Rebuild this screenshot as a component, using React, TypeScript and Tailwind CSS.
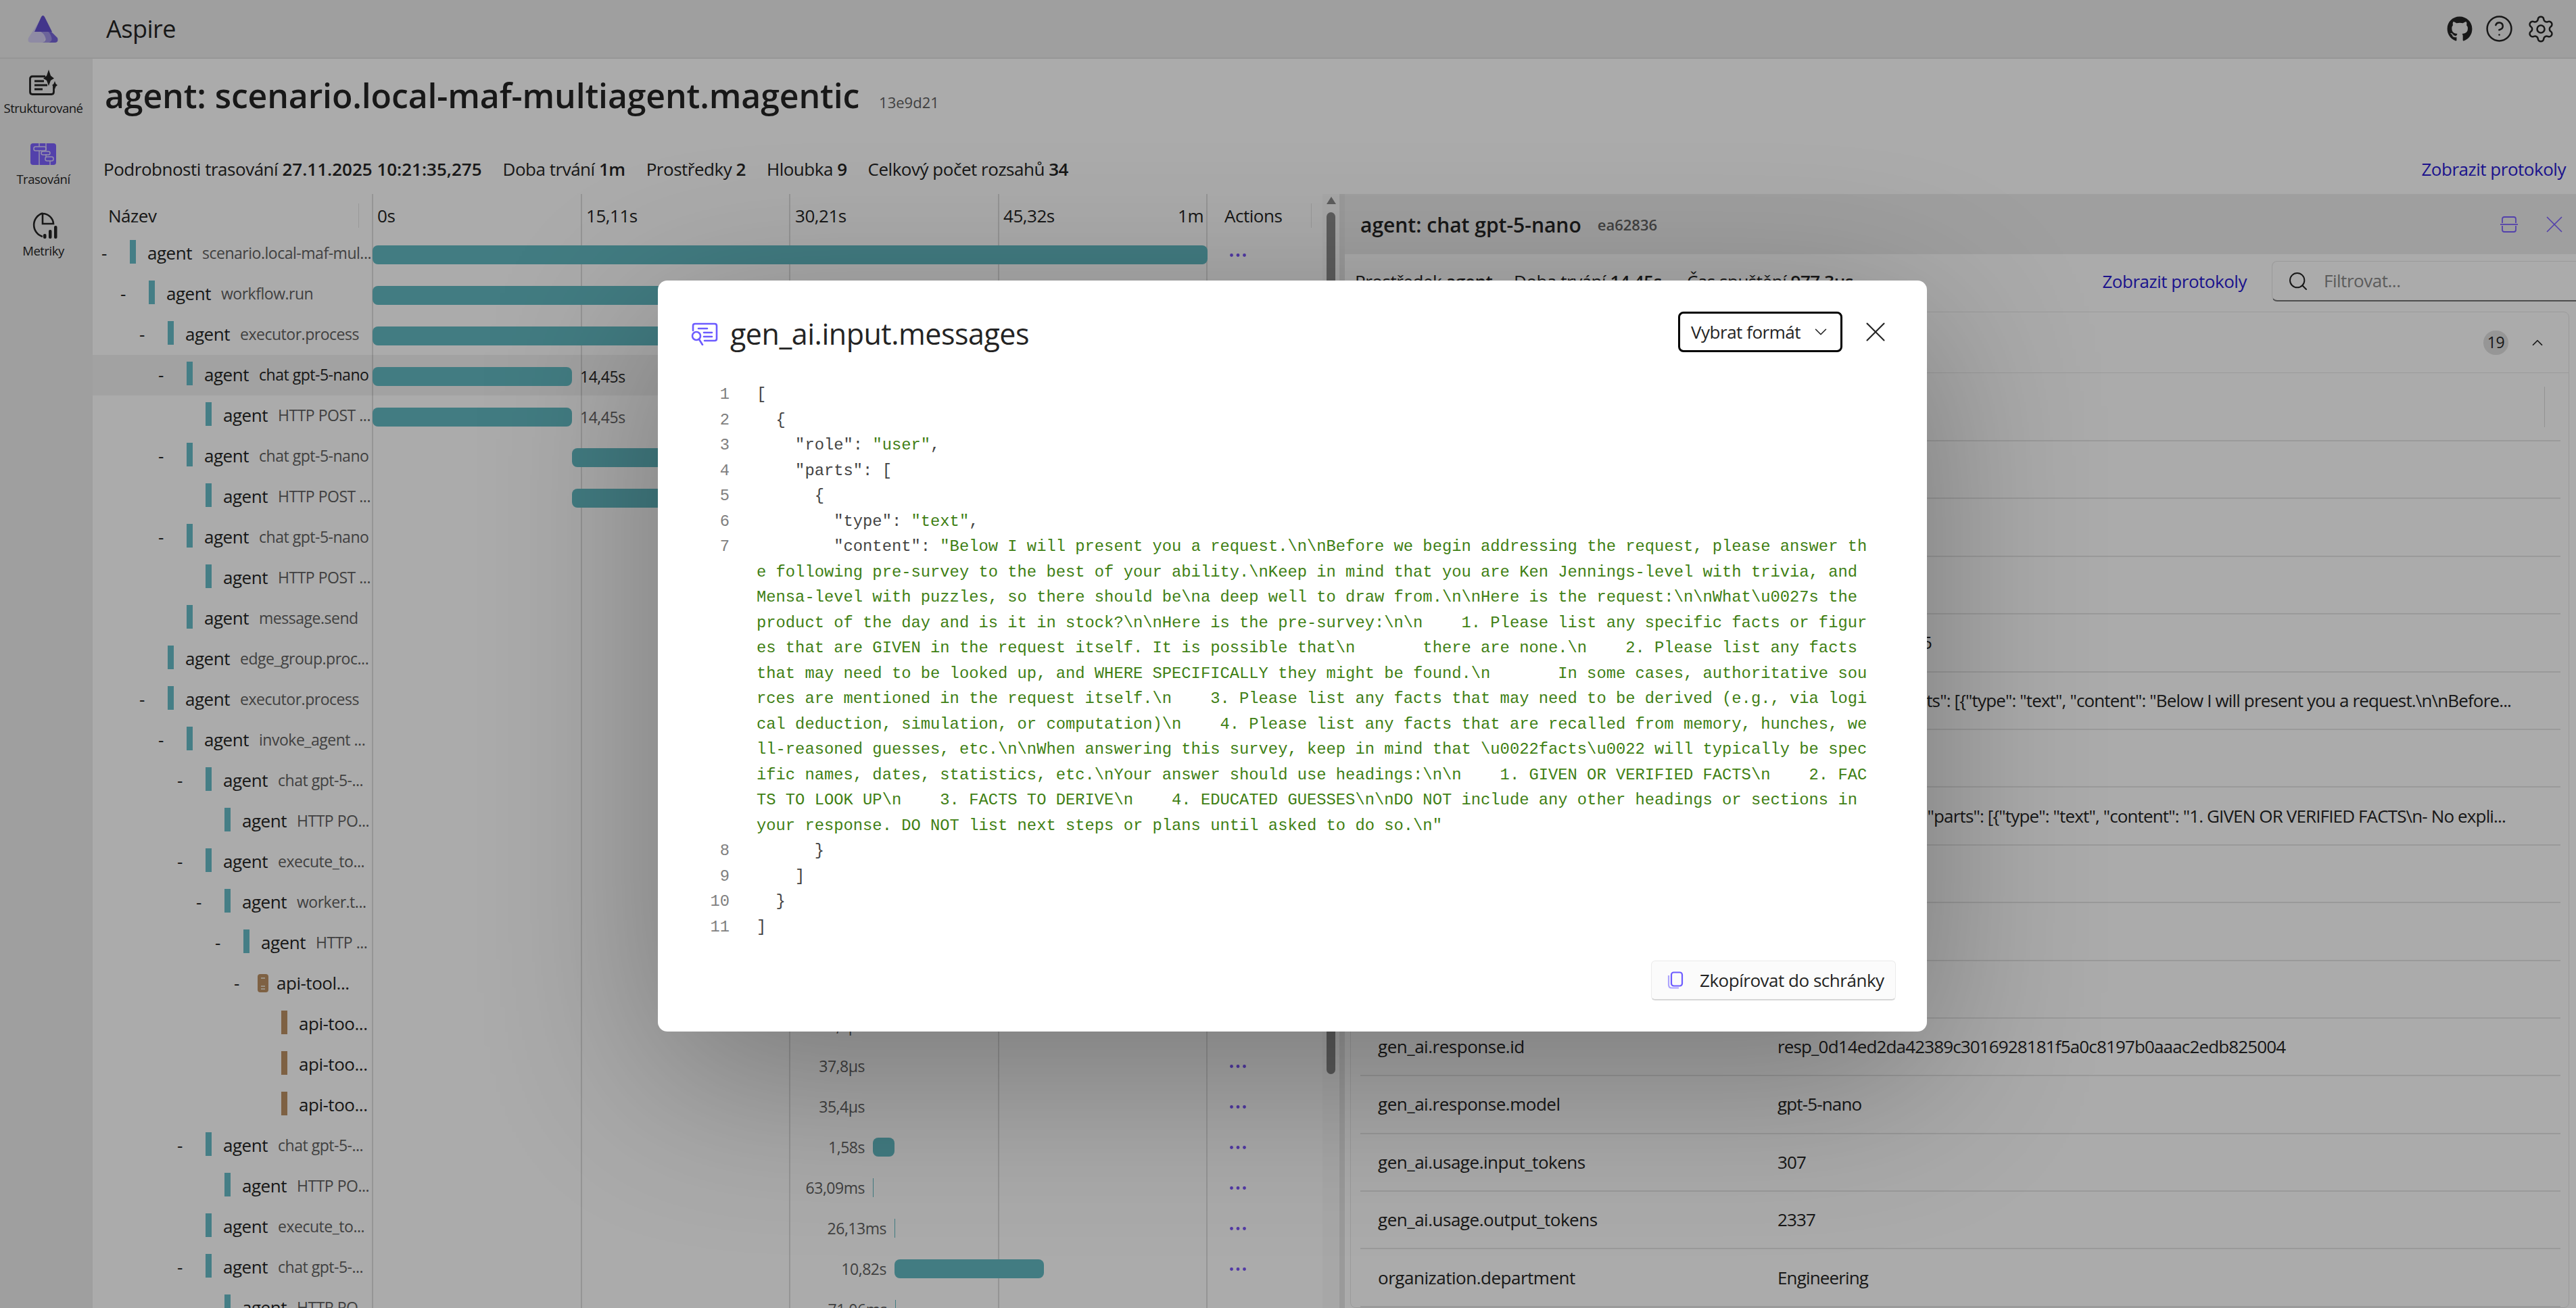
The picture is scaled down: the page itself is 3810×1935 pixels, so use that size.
import { ChevronDown, ChevronUp, CircleHelp, Search, Settings, X } from 'lucide-react';
import { FaGithub } from 'react-icons/fa';

interface SpanRow {
  level: number;
  sub?: string;
  name?: string;
  expand?: boolean;
  service?: boolean;
  selected?: boolean;
  color?: 'teal' | 'brown';
  start: number;
  width: number;
  label?: string;
  labelLeft?: boolean;
}

const rows: SpanRow[] = [
  { level: 0, sub: 'scenario.local-maf-mul...', expand: true, start: 1, width: 1235 },
  { level: 1, sub: 'workflow.run', expand: true, start: 1, width: 1235 },
  { level: 2, sub: 'executor.process', expand: true, start: 1, width: 1235 },
  { level: 3, sub: 'chat gpt-5-nano', expand: true, selected: true, start: 1, width: 295, label: '14,45s' },
  { level: 4, sub: 'HTTP POST ...', start: 1, width: 295, label: '14,45s' },
  { level: 3, sub: 'chat gpt-5-nano', expand: true, start: 296, width: 300 },
  { level: 4, sub: 'HTTP POST ...', start: 296, width: 300 },
  { level: 3, sub: 'chat gpt-5-nano', expand: true, start: 600, width: 100 },
  { level: 4, sub: 'HTTP POST ...', start: 600, width: 100 },
  { level: 3, sub: 'message.send', start: 700, width: 2 },
  { level: 2, sub: 'edge_group.proc...', start: 700, width: 2 },
  { level: 2, sub: 'executor.process', expand: true, start: 700, width: 500 },
  { level: 3, sub: 'invoke_agent ...', expand: true, start: 700, width: 500 },
  { level: 4, sub: 'chat gpt-5-...', expand: true, start: 700, width: 40 },
  { level: 5, sub: 'HTTP PO...', start: 700, width: 40 },
  { level: 4, sub: 'execute_to...', expand: true, start: 741, width: 1 },
  { level: 5, sub: 'worker.t...', expand: true, start: 741, width: 1 },
  { level: 6, sub: 'HTTP ...', expand: true, start: 741, width: 1 },
  { level: 7, name: 'api-tool...', service: true, expand: true, color: 'brown', start: 741, width: 0 },
  { level: 8, name: 'api-too...', color: 'brown', start: 741, width: 0, label: '34,6µs', labelLeft: true },
  { level: 8, name: 'api-too...', color: 'brown', start: 741, width: 0, label: '37,8µs', labelLeft: true },
  { level: 8, name: 'api-too...', color: 'brown', start: 741, width: 0, label: '35,4µs', labelLeft: true },
  { level: 4, sub: 'chat gpt-5-...', expand: true, start: 741, width: 32, label: '1,58s', labelLeft: true },
  { level: 5, sub: 'HTTP PO...', start: 741, width: 1, label: '63,09ms', labelLeft: true },
  { level: 4, sub: 'execute_to...', start: 773, width: 1, label: '26,13ms', labelLeft: true },
  { level: 4, sub: 'chat gpt-5-...', expand: true, start: 773, width: 221, label: '10,82s', labelLeft: true },
  { level: 5, sub: 'HTTP PO...', start: 774, width: 1, label: '71,06ms', labelLeft: true },
];

const attributes = [
  ['gen_ai.operation.name', 'chat'],
  ['gen_ai.provider.name', 'openai'],
  ['gen_ai.request.model', 'gpt-5-nano'],
  ['gen_ai.system.version', 'maf-multiagent-v1.5'],
  [
    'gen_ai.input.messages',
    '[{"role": "user", "parts": [{"type": "text", "content": "Below I will present you a request.\\n\\nBefore...',
  ],
  ['gen_ai.output.type', 'text'],
  [
    'gen_ai.output.messages',
    '[{"role": "assistant", "parts": [{"type": "text", "content": "1. GIVEN OR VERIFIED FACTS\\n- No expli...',
  ],
  ['gen_ai.request.temperature', '1'],
  ['gen_ai.request.top_p', '1'],
  ['gen_ai.response.finish_reasons', 'stop'],
  ['gen_ai.response.id', 'resp_0d14ed2da42389c3016928181f5a0c8197b0aaac2edb825004'],
  ['gen_ai.response.model', 'gpt-5-nano'],
  ['gen_ai.usage.input_tokens', '307'],
  ['gen_ai.usage.output_tokens', '2337'],
  ['organization.department', 'Engineering'],
];

const contentLines = [
  'e following pre-survey to the best of your ability.\\nKeep in mind that you are Ken Jennings-level with trivia, and ',
  'Mensa-level with puzzles, so there should be\\na deep well to draw from.\\n\\nHere is the request:\\n\\nWhat\\u0027s the ',
  'product of the day and is it in stock?\\n\\nHere is the pre-survey:\\n\\n    1. Please list any specific facts or figur',
  'es that are GIVEN in the request itself. It is possible that\\n       there are none.\\n    2. Please list any facts ',
  'that may need to be looked up, and WHERE SPECIFICALLY they might be found.\\n       In some cases, authoritative sou',
  'rces are mentioned in the request itself.\\n    3. Please list any facts that may need to be derived (e.g., via logi',
  'cal deduction, simulation, or computation)\\n    4. Please list any facts that are recalled from memory, hunches, we',
  'll-reasoned guesses, etc.\\n\\nWhen answering this survey, keep in mind that \\u0022facts\\u0022 will typically be spec',
  'ific names, dates, statistics, etc.\\nYour answer should use headings:\\n\\n    1. GIVEN OR VERIFIED FACTS\\n    2. FAC',
  'TS TO LOOK UP\\n    3. FACTS TO DERIVE\\n    4. EDUCATED GUESSES\\n\\nDO NOT include any other headings or sections in ',
  'your response. DO NOT list next steps or plans until asked to do so.\\n"',
];

const Str = ({ children }: { children: string }) => <span className="text-[#3f7f14]">{children}</span>;

function AspireLogo() {
  return (
    <svg width="45" height="40" viewBox="0 0 45 40">
      <path d="M22 1 L1 33 Q-1 40 5 40 H24 L30 20 Z" fill="#d6d0f5" />
      <path d="M16 22 H28 Q34 24 36 33 Q37 40 31 40 H22 Q28 38 26 32 Q24 26 16 22 Z" fill="#a195e6" />
      <path d="M28 22 H33 L44 33 Q46 40 40 40 H31 Q37 38 35 32 Q33 25 28 22 Z" fill="#7664d8" />
      <path d="M22.5 0 Q24 0 25 2 L36 24 H10 L20 2 Q21 0 22.5 0 Z" fill="#6350d0" />
    </svg>
  );
}

function StructuredIcon() {
  return (
    <svg width="42" height="38" viewBox="0 0 42 38" fill="none">
      <path d="M24 10 H5 Q1.500 10 1.500 13.500 V33 Q1.500 36.500 5 36.500 H33 Q36.500 36.500 36.500 33 V24" stroke="#242424" strokeWidth="2.800" />
      <path d="M8 17 H22 M8 23 H27 M8 29 H20" stroke="#242424" strokeWidth="2.800" />
      <path d="M29 0 L32 9 L37 13 L32 16 L29 24 L26 16 L21 13 L26 9 Z" fill="#242424" />
      <path d="M38 17 L39.500 21 L42 23 L39.500 25 L38 29 L36.500 25 L34 23 L36.500 21 Z" fill="#242424" />
    </svg>
  );
}

function TraceIcon() {
  return (
    <svg width="38" height="32" viewBox="0 0 38 32" fill="none">
      <rect width="38" height="32" rx="4" fill="#7d62ff" />
      <path d="M13 0 V5 M13 11 V32 M23 0 V11 M23 16 V21 M29 26 V32" stroke="#ddd6ff" strokeWidth="1.500" />
      <rect x="5" y="5" width="18" height="6" rx="2.500" stroke="#ddd6ff" strokeWidth="1.500" />
      <rect x="16" y="12" width="13" height="5" rx="2.500" stroke="#ddd6ff" strokeWidth="1.500" />
      <rect x="22" y="20" width="12" height="6" rx="2.500" stroke="#ddd6ff" strokeWidth="1.500" />
    </svg>
  );
}

function MetricsIcon() {
  return (
    <svg width="42" height="40" viewBox="0 0 42 40" fill="none">
      <path d="M20 1.500 A18 18 0 0 0 20 36" stroke="#242424" strokeWidth="2.600" />
      <path d="M20 2 V17 H36 A16 16 0 0 0 20 2 Z" stroke="#242424" strokeWidth="2.600" />
      <rect x="21" y="32" width="4.500" height="7" rx="2" fill="#242424" />
      <rect x="29" y="26" width="4.500" height="13" rx="2" fill="#242424" />
      <rect x="37" y="20" width="4.500" height="19" rx="2" fill="#242424" />
    </svg>
  );
}

function SplitIcon() {
  return (
    <svg width="26" height="24" viewBox="0 0 26 24" fill="none" stroke="#7d62ff" strokeWidth="1.800">
      <path d="M3 10 V4 Q3 1 6 1 H20 Q23 1 23 4 V10" />
      <path d="M0 12 H26" />
      <path d="M3 14 V20 Q3 23 6 23 H20 Q23 23 23 20 V14" />
    </svg>
  );
}

function DialogIcon() {
  return (
    <svg width="40" height="34" viewBox="0 0 40 34" fill="none" stroke="#6d5cff" strokeWidth="2.600" strokeLinecap="round">
      <path d="M3 12 V5 Q3 2 6 2 H35 Q38 2 38 5 V24 Q38 27 35 27 H20" />
      <path d="M11 9 H24 M19 15 H31 M19 21 H31" />
      <circle cx="8" cy="20" r="6" />
      <path d="M12 25 L17 33" />
    </svg>
  );
}

function CopyIcon() {
  return (
    <svg width="24" height="26" viewBox="0 0 24 26" fill="none" stroke="#6d5cff" strokeWidth="2.200">
      <rect x="6" y="1.500" width="16" height="20" rx="3.500" />
      <path d="M2 6 V20 Q2 24.500 6.500 24.500 H17" strokeOpacity="0.550" />
    </svg>
  );
}

function Dots() {
  return (
    <svg width="24" height="5" viewBox="0 0 24 5" fill="#7a55f5" className="mt-[4px]">
      <circle cx="2.500" cy="2.500" r="2.400" />
      <circle cx="12" cy="2.500" r="2.400" />
      <circle cx="21.500" cy="2.500" r="2.400" />
    </svg>
  );
}

function Stat({ label, value, valueClass }: { label: string; value: string; valueClass?: string }) {
  return (
    <span className="whitespace-nowrap">
      {label} <b className={`font-semibold ${valueClass ?? ''}`}>{value}</b>
    </span>
  );
}

function SpanRowView({ row }: { row: SpanRow }) {
  const markerColor = row.color === 'brown' ? 'bg-[#bc9165]' : 'bg-[#68bdc8]';
  return (
    <div className={`flex h-[60px] items-center ${row.selected ? 'bg-black/5' : ''}`}>
      <div
        className="flex h-full w-[413px] shrink-0 items-center overflow-hidden whitespace-nowrap text-[26px] text-[#242424]"
        style={{ paddingLeft: 13 + row.level * 28 }}
      >
        <span className="-mt-[2px] w-[42px] shrink-0">{row.expand ? '-' : ''}</span>
        {row.service ? (
          <svg width="16" height="27" viewBox="0 0 16 27" className="-ml-[7px] mr-[12px] -mt-[2px] shrink-0">
            <rect width="16" height="27" rx="4" fill="#bc9165" />
            <path d="M5 6 H11 M5 18 H11 M5 22 H11" stroke="#e8dcc8" strokeWidth="2" />
          </svg>
        ) : (
          <span className={`-mt-[5px] mr-[17px] h-[35px] w-[9px] shrink-0 ${markerColor}`} />
        )}
        {row.name ? (
          <span className="-mt-[2px]">{row.name}</span>
        ) : (
          <>
            <span className="-mt-[2px] mr-[15px]">agent</span>
            <span className={`-mt-[2px] text-[23px] ${row.selected ? 'text-[#242424]' : 'text-[#616161]'}`}>{row.sub}</span>
          </>
        )}
      </div>
      <div className="relative flex h-full w-[1236px] shrink-0 items-center">
        <div className="mt-[4px] flex items-center" style={{ marginLeft: row.start }}>
          {row.label && row.labelLeft && (
            <span className="absolute whitespace-nowrap text-[23px] text-[#616161]" style={{ right: 1236 - row.start + 12 }}>
              {row.label}
            </span>
          )}
          <div
            className={row.width > 2 ? 'h-[28px] rounded-lg bg-[#63b9c2]' : 'h-[28px] bg-[#63b9c2]'}
            style={{ width: row.width }}
          />
          {row.label && !row.labelLeft && (
            <span className={`ml-[12px] whitespace-nowrap text-[23px] ${row.selected ? 'text-[#242424]' : 'text-[#616161]'}`}>
              {row.label}
            </span>
          )}
        </div>
      </div>
      <div className="flex flex-1 items-center pl-[33px]">
        <Dots />
      </div>
    </div>
  );
}

function TracePane() {
  return (
    <div className="relative h-full w-[1819px] shrink-0 overflow-hidden">
      {/* timeline grid lines sit behind the rows */}
      <div className="absolute bottom-0 left-[413px] top-0 flex w-[1236px] border-r-2 border-[#dfdfdf]">
        <div className="flex-1 border-l-2 border-[#dfdfdf]" />
        <div className="flex-1 border-l-2 border-[#dfdfdf]" />
        <div className="flex-1 border-l-2 border-[#dfdfdf]" />
        <div className="flex-1 border-l-2 border-[#dfdfdf]" />
      </div>
      <div className="relative">
        <div className="flex h-[58px] items-center pt-[6px] text-[26px] text-[#242424]">
          <div className="flex w-[413px] shrink-0 items-center justify-between pl-[23px]">
            <span>Název</span>
            <span className="mr-[19px] h-[36px] w-px bg-[#e4e4e4]" />
          </div>
          <div className="flex w-[1236px] shrink-0 pl-[8px] pr-[6px]">
            <span className="w-[309px]">0s</span>
            <span className="w-[309px]">15,11s</span>
            <span className="w-[308px]">30,21s</span>
            <span>45,32s</span>
            <span className="ml-auto">1m</span>
          </div>
          <div className="flex flex-1 items-center justify-between pl-[25px] pr-[16px]">
            <span>Actions</span>
            <span className="h-[36px] w-px bg-[#e4e4e4]" />
          </div>
        </div>
        {rows.map((row, i) => (
          <SpanRowView key={i} row={row} />
        ))}
      </div>
    </div>
  );
}

function DetailsPane() {
  return (
    <div className="h-full min-w-0 flex-1 overflow-hidden">
      <div className="flex h-[89px] items-center bg-[#eeeeee] pl-[23px] pr-[11px]">
        <span className="mt-[2px] text-[30px] font-semibold tracking-normal text-[#242424]">agent: chat gpt-5-nano</span>
        <span className="ml-[24px] mt-[2px] text-[22px] font-semibold tracking-normal text-[#616161]">ea62836</span>
        <span className="ml-auto mr-[33px]">
          <SplitIcon />
        </span>
        <X size={42} strokeWidth={1} className="text-[#7d62ff]" />
      </div>
      <div className="flex h-[85px] items-center whitespace-nowrap pb-[5px] pl-[15px] text-[26px] text-[#242424]">
        <span className="w-[235px]">
          <Stat label="Prostředek" value="agent" />
        </span>
        <span className="w-[256px]">
          <Stat label="Doba trvání" value="14,45s" />
        </span>
        <Stat label="Čas spuštění" value="977,3µs" />
        <span className="ml-auto mr-[37px] text-[26px] text-[#2a1bd1]">Zobrazit protokoly</span>
        <div className="-mr-[20px] flex h-[60px] w-[470px] shrink-0 items-center rounded-lg border border-[#e6e6e6] border-b-2 border-b-[#757575] pl-[22px] text-[#8a8a8a]">
          <Search size={32} strokeWidth={1.5} className="mr-[22px] text-[#242424]" />
          Filtrovat...
        </div>
      </div>
      <div className="ml-[8px] mr-[10px] rounded-lg border border-[#e8e8e8]">
        <div className="flex h-[90px] items-center border-b border-[#e8e8e8] pl-[16px] pr-[33px] text-[26px] text-[#242424]">
          <span className="font-semibold">Vlastnosti</span>
          <span className="ml-auto mr-[30px] flex h-[36px] w-[37px] items-center justify-center rounded-full bg-[#e0e0e0] text-[23px]">
            19
          </span>
          <ChevronUp size={26} strokeWidth={1.6} />
        </div>
        <div className="px-[14px] pr-[12px]">
          <div className="flex h-[101px] items-center justify-end border-b-2 border-[#e6e6e6] pr-[23px]">
            <span className="h-[60px] w-px bg-[#dcdcdc]" />
          </div>
          {attributes.map(([name, value]) => (
            <div key={name} className="flex h-[85.4px] items-center border-b-2 border-[#e6e6e6] pl-[26px] text-[26px] text-[#242424]">
              <span className="w-[591px] shrink-0 whitespace-nowrap">{name}</span>
              <span className="w-[1150px] truncate tracking-[-0.033em]">{value}</span>
            </div>
          ))}
        </div>
      </div>
    </div>
  );
}

function CodeDialog() {
  const Num = ({ n }: { n: number }) => (
    <span className="w-[146px] shrink-0 pr-[40px] text-right text-[#808080]">{n}</span>
  );
  const Line = ({ n, children }: { n: number; children: React.ReactNode }) => (
    <div className="flex">
      <Num n={n} />
      <span className="whitespace-pre text-[#444444]">{children}</span>
    </div>
  );
  return (
    <div className="ml-[13px] mt-[6px] flex h-[1111px] w-[1877px] flex-col rounded-[14px] bg-white tracking-[-0.03em] text-[#242424] shadow-[0_64px_256px_rgba(0,0,0,0.3)]">
      <div className="flex h-[150px] shrink-0 items-start pl-[49px] pr-[51px] pt-[46px]">
        <span className="mt-[16px] mr-[18px]">
          <DialogIcon />
        </span>
        <span className="mt-[3px] text-[43px] leading-[60px]">gen_ai.input.messages</span>
        <div className="ml-auto flex h-[60px] w-[243px] items-center justify-between rounded-lg border-[3.5px] border-black pl-[16px] pr-[14px] text-[26px]">
          Vybrat formát
          <ChevronDown size={30} strokeWidth={1.3} />
        </div>
        <X size={50} strokeWidth={1} className="ml-[24px] mt-[5px]" />
      </div>
      <div className="min-h-0 flex-1 font-['Liberation_Mono',monospace] text-[23.8px] leading-[37.5px] tracking-normal">
        <Line n={1}>[</Line>
        <Line n={2}>{'  {'}</Line>
        <Line n={3}>
          {'    "role": '}
          <Str>"user"</Str>,
        </Line>
        <Line n={4}>{'    "parts": ['}</Line>
        <Line n={5}>{'      {'}</Line>
        <Line n={6}>
          {'        "type": '}
          <Str>"text"</Str>,
        </Line>
        <Line n={7}>
          {'        "content": '}
          <Str>{'"Below I will present you a request.\\n\\nBefore we begin addressing the request, please answer th'}</Str>
        </Line>
        {contentLines.map((text) => (
          <div key={text} className="whitespace-pre pl-[146px] text-[#3f7f14]">
            {text}
          </div>
        ))}
        <Line n={8}>{'      }'}</Line>
        <Line n={9}>{'    ]'}</Line>
        <Line n={10}>{'  }'}</Line>
        <Line n={11}>]</Line>
      </div>
      <div className="flex shrink-0 justify-end pb-[46px] pr-[46px]">
        <div className="flex h-[59px] w-[362px] items-center gap-[24px] rounded-md border border-[#ebebeb] border-b-2 border-b-[#d6d6d6] bg-[#fbfbfb] pl-[23px] text-[26px]">
          <CopyIcon />
          Zkopírovat do schránky
        </div>
      </div>
    </div>
  );
}

export default function App() {
  return (
    <div className="relative h-[1935px] w-[3810px] overflow-hidden bg-white font-['Open_Sans',sans-serif] tracking-[-0.03em] text-[#242424]">
      <header className="flex h-[87px] items-center border-b-2 border-[#e0e0e0] bg-[#eeeeee] pr-[30px]">
        <div className="ml-[41px] mr-[71px]">
          <AspireLogo />
        </div>
        <span className="text-[36px]">Aspire</span>
        <div className="ml-auto flex items-center gap-[18px]">
          <FaGithub size={38} />
          <CircleHelp size={43} strokeWidth={1.4} />
          <Settings size={44} strokeWidth={1.4} />
        </div>
      </header>
      <div className="flex h-[1848px]">
        <nav className="flex w-[137px] shrink-0 flex-col items-center bg-[#eeeeee] pr-[9px] pt-[16px] text-[18.500px]">
          <div className="flex h-[78px] flex-col items-center">
            <StructuredIcon />
            <span className="mt-[6px] leading-[26px]">Strukturované</span>
          </div>
          <div className="mt-[31px] flex flex-col items-center">
            <TraceIcon />
            <span className="mt-[8px] leading-[26px]">Trasování</span>
          </div>
          <div className="mt-[36px] flex flex-col items-center">
            <MetricsIcon />
            <span className="mt-[4px] leading-[26px]">Metriky</span>
          </div>
        </nav>
        <main className="flex min-w-0 flex-1 flex-col">
          <div className="flex h-[108px] items-center pl-[18px]">
            <h1 className="text-[50px] font-semibold tracking-[-0.003em]">agent: scenario.local-maf-multiagent.magentic</h1>
            <span className="ml-[29px] mt-[20px] text-[22px] tracking-normal text-[#616161]">13e9d21</span>
          </div>
          <div className="flex h-[92px] items-center gap-[31px] pl-[16px] pr-[15px] pt-[18px] text-[26px]">
            <Stat label="Podrobnosti trasování" value="27.11.2025 10:21:35,275" valueClass="tracking-normal" />
            <Stat label="Doba trvání" value="1m" />
            <Stat label="Prostředky" value="2" />
            <Stat label="Hloubka" value="9" />
            <Stat label="Celkový počet rozsahů" value="34" />
            <span className="ml-auto text-[#2a1bd1]">Zobrazit protokoly</span>
          </div>
          <div className="flex min-h-0 flex-1">
            <TracePane />
            <div className="flex w-[25px] shrink-0 flex-col items-center bg-[#fafafa] pt-[4px]">
              <span className="h-0 w-0 border-x-[7px] border-b-[11px] border-x-transparent border-b-[#8a8a8a]" />
              <span className="mt-[12px] h-[1275px] w-[13px] rounded-full bg-[#8a8a8a]" />
            </div>
            <div className="w-[8px] shrink-0 bg-[#e6e6e6]" />
            <DetailsPane />
          </div>
        </main>
      </div>
      {/* dialog backdrop */}
      <div className="absolute inset-0 flex items-center justify-center bg-black/33">
        <CodeDialog />
      </div>
    </div>
  );
}
